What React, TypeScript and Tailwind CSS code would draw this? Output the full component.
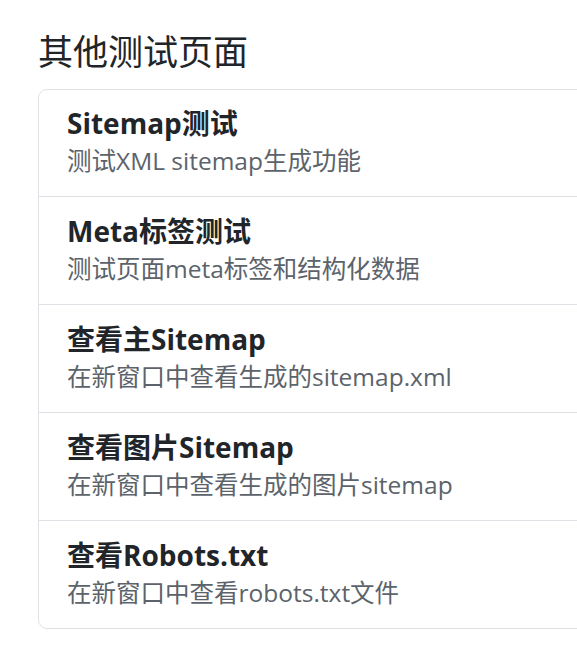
import React from 'react';

const pages = [
  { title: 'Sitemap测试', desc: '测试XML sitemap生成功能' },
  { title: 'Meta标签测试', desc: '测试页面meta标签和结构化数据' },
  { title: '查看主Sitemap', desc: '在新窗口中查看生成的sitemap.xml' },
  { title: '查看图片Sitemap', desc: '在新窗口中查看生成的图片sitemap' },
  { title: '查看Robots.txt', desc: '在新窗口中查看robots.txt文件' },
];

export default function App() {
  return (
    <div className="w-[577px] h-[652px] overflow-hidden bg-white font-['Open_Sans','Noto_Sans_CJK_SC',sans-serif]">
      <div className="pl-[38px] pt-[31px]">
        <h2 className="text-[35px] leading-[42px] font-normal text-[#212529] mb-[16px]">其他测试页面</h2>
        <div className="w-[620px] border border-[#dee2e6] rounded-[9px] bg-white">
          {pages.map((page, i) => (
            <div
              key={page.title}
              className={`pl-[28px] pb-[17px] ${i > 0 ? 'pt-[18px] border-t border-[#dee2e6]' : 'pt-[17px]'}`}
            >
              <div className="text-[28px] leading-[32px] font-bold text-[#212529] mb-[4px]">{page.title}</div>
              <div className="text-[24.5px] leading-[36px] text-[#5c636a]">{page.desc}</div>
            </div>
          ))}
        </div>
      </div>
    </div>
  );
}
